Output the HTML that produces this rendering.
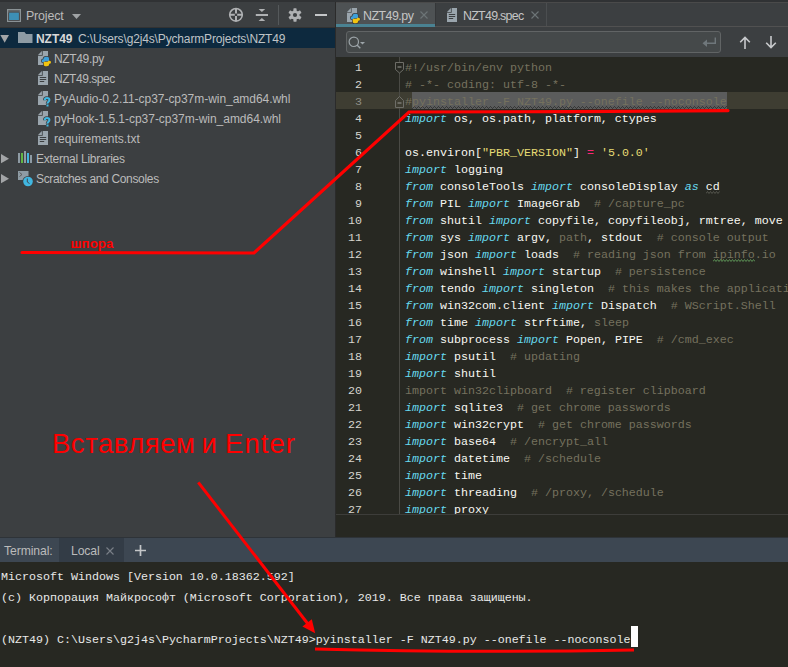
<!DOCTYPE html>
<html><head><meta charset="utf-8">
<style>
*{margin:0;padding:0;box-sizing:border-box}
html,body{width:788px;height:667px;overflow:hidden;background:#3c3f41}
body{position:relative;font-family:"Liberation Sans",sans-serif}
.a{position:absolute}
.ui{font-family:"Liberation Sans",sans-serif;font-size:12px;color:#bbbbbb;white-space:pre}
.mono{font-family:"Liberation Mono",monospace;font-size:11.67px;white-space:pre}
.row{height:20px;line-height:20px}
.ln{position:absolute;left:0;width:26px;text-align:right;color:#d6d6ce}
.cl{position:absolute;left:69px;color:#f8f8f2}
.kw{color:#66d9ef;font-style:italic}
.cm{color:#75715e}
.st{color:#e6db74}
.op{color:#f92672}
.un{color:#75715e}
.tl{position:absolute;left:1px;color:#e8e8e8}
</style></head><body>
<svg width="0" height="0" style="position:absolute">
 <defs>
  <symbol id="txt" viewBox="0 0 14 16"><path d="M4.7 0H10V14H0V4.7H4.7Z" fill="#9aa5ad"/><path d="M0 3.9L3.9 0V3.9Z" fill="#9aa5ad"/><path d="M1.8 6.5H8.2M1.8 8.5H8.2M1.8 10.5H6.2" fill="none" stroke="#3c3f41" stroke-width="1"/></symbol>
  <symbol id="py" viewBox="0 0 14 16"><path d="M4.7 0H10V14H0V4.7H4.7Z" fill="#9aa5ad"/><path d="M0 3.9L3.9 0V3.9Z" fill="#9aa5ad"/>
    <g fill="#3c3f41" stroke="#3c3f41" stroke-width="1.5" stroke-linejoin="round"><path d="M5.5 8.3Q5.5 5.8 8 5.8H9.2Q11 5.8 11 7.6V9.5Q11 10.3 10.2 10.3H7.3Q6.5 10.3 6.5 11.1V11.3H5Q3.7 11.3 3.7 9.8Q3.7 8.3 5.5 8.3Z"/><path d="M11.2 12.7Q11.2 15.2 8.7 15.2H7.5Q5.7 15.2 5.7 13.4V11.5Q5.7 10.7 6.5 10.7H9.4Q10.2 10.7 10.2 9.9V9.7H11.7Q13 9.7 13 11.2Q13 12.7 11.2 12.7Z"/></g>
    <path d="M5.5 8.3Q5.5 5.8 8 5.8H9.2Q11 5.8 11 7.6V9.5Q11 10.3 10.2 10.3H7.3Q6.5 10.3 6.5 11.1V11.3H5Q3.7 11.3 3.7 9.8Q3.7 8.3 5.5 8.3Z" fill="#3d9fd9"/><path d="M11.2 12.7Q11.2 15.2 8.7 15.2H7.5Q5.7 15.2 5.7 13.4V11.5Q5.7 10.7 6.5 10.7H9.4Q10.2 10.7 10.2 9.9V9.7H11.7Q13 9.7 13 11.2Q13 12.7 11.2 12.7Z" fill="#f2c40f"/></symbol>
  <symbol id="whl" viewBox="0 0 14 16"><path d="M4.7 0H10V14H0V4.7H4.7Z" fill="#9aa5ad"/><path d="M0 3.9L3.9 0V3.9Z" fill="#9aa5ad"/>
    <path d="M6.8 9.2C6.8 7.6 7.8 7 9 7C10.4 7 11.4 7.8 11.4 9C11.4 10.6 9.5 10.8 9.5 12.6" fill="none" stroke="#3c3f41" stroke-width="3.6"/>
    <rect x="8" y="12.6" width="3" height="3.4" fill="#3c3f41"/>
    <path d="M6.8 9.2C6.8 7.6 7.8 7 9 7C10.4 7 11.4 7.8 11.4 9C11.4 10.6 9.5 10.8 9.5 12.6" fill="none" stroke="#40b6e0" stroke-width="2"/>
    <rect x="8.5" y="13.5" width="2" height="2" fill="#40b6e0"/>
  </symbol>
 </defs>
</svg>

<div class="a" style="left:0;top:0;width:788px;height:2px;background:#303234"></div>

<!-- PROJECT PANEL -->
<div class="a" style="left:0;top:2px;width:335px;height:535px;background:#3c3f41"></div>
<div class="a" style="left:0;top:27px;width:335px;height:1px;background:#323232"></div>
<svg class="a" style="left:7px;top:9px" width="14" height="13" viewBox="0 0 14 13"><rect x="0.6" y="0.6" width="12.8" height="11.8" fill="none" stroke="#8a9296" stroke-width="1.2"/><rect x="0.6" y="0.6" width="12.8" height="3" fill="#8a9296" opacity="0.35"/><rect x="2.1" y="3.7" width="9.8" height="7.3" fill="#3d8fb5"/></svg>
<div class="a ui" style="left:26px;top:7px;line-height:18px;font-size:12.4px;color:#bbbbbb;letter-spacing:-0.15px">Project</div>
<svg class="a" style="left:71.5px;top:14px" width="9" height="5"><path d="M0 0H9L4.5 5Z" fill="#a0a3a5"/></svg>
<svg class="a" style="left:228px;top:7px" width="16" height="16" viewBox="0 0 16 16"><circle cx="8" cy="7.8" r="6.3" fill="none" stroke="#afb1b3" stroke-width="1.6"/><path d="M8 1.5V6.6M8 9V14.1M1.7 7.8H6.8M9.2 7.8H14.3" stroke="#afb1b3" stroke-width="2"/></svg>
<svg class="a" style="left:255px;top:8px" width="14" height="14" viewBox="0 0 14 14"><path d="M0.8 7H13" stroke="#afb1b3" stroke-width="2"/><path d="M3.6 1h6.6L6.9 4.1Z M3.6 13h6.6L6.9 9.9Z" fill="#afb1b3"/></svg>
<div class="a" style="left:278px;top:5px;width:1px;height:20px;background:#55595b"></div>
<svg class="a" style="left:288px;top:8px" width="14" height="14" viewBox="0 0 14 14"><g fill="#afb1b3"><circle cx="7" cy="7" r="4.6"/><rect x="5.4" y="0.3" width="3.2" height="13.4" rx="0.6"/><rect x="5.4" y="0.3" width="3.2" height="13.4" rx="0.6" transform="rotate(60 7 7)"/><rect x="5.4" y="0.3" width="3.2" height="13.4" rx="0.6" transform="rotate(-60 7 7)"/></g><circle cx="7" cy="7" r="2.1" fill="#3c3f41"/></svg>
<div class="a" style="left:315px;top:14px;width:12px;height:2px;background:#c4c6c8"></div>

<div class="a" style="left:0;top:28px;width:335px;height:20px;background:#0d293e"></div>
<svg class="a" style="left:0;top:35px" width="10" height="8"><path d="M0.3 0H9L4.65 7.8Z" fill="#a3a5a7"/></svg>
<svg class="a" style="left:18px;top:32px" width="15" height="12"><path d="M0 0H6.5L8 2H14.5V11H0Z" fill="#8e9ba4"/></svg>
<div class="a ui row" style="left:36px;top:29px;font-weight:bold;color:#d8d8d8;letter-spacing:-0.05px">NZT49</div>
<div class="a ui row" style="left:78px;top:29px;color:#bfc3c6;letter-spacing:-0.15px">C:\Users\g2j4s\PycharmProjects\NZT49</div>

<svg class="a" style="left:38px;top:51px" width="14" height="16"><use href="#py"/></svg>
<div class="a ui row" style="left:54px;top:49px;letter-spacing:-0.35px">NZT49.py</div>
<svg class="a" style="left:38px;top:71px" width="14" height="16"><use href="#txt"/></svg>
<div class="a ui row" style="left:54px;top:69px;letter-spacing:-0.45px">NZT49.spec</div>
<svg class="a" style="left:38px;top:91px" width="14" height="16"><use href="#whl"/></svg>
<div class="a ui row" style="left:54px;top:89px;letter-spacing:-0.04px">PyAudio-0.2.11-cp37-cp37m-win_amd64.whl</div>
<svg class="a" style="left:38px;top:111px" width="14" height="16"><use href="#whl"/></svg>
<div class="a ui row" style="left:54px;top:109px;letter-spacing:-0.03px">pyHook-1.5.1-cp37-cp37m-win_amd64.whl</div>
<svg class="a" style="left:38px;top:131px" width="14" height="16"><use href="#txt"/></svg>
<div class="a ui row" style="left:54px;top:129px;letter-spacing:-0.02px">requirements.txt</div>

<svg class="a" style="left:1px;top:154px" width="9" height="10"><path d="M0 0V9.3L8 4.65Z" fill="#a3a5a7"/></svg>
<svg class="a" style="left:18px;top:151px" width="15" height="13"><rect x="0" y="2" width="2" height="10" fill="#8e9ba4"/><rect x="3" y="2" width="2" height="10" fill="#62b543"/><rect x="6" y="0" width="2" height="12" fill="#8e9ba4"/><rect x="9" y="2" width="2" height="10" fill="#40b6e0"/><rect x="12" y="4" width="2" height="8" fill="#8e9ba4"/></svg>
<div class="a ui row" style="left:36px;top:149px;letter-spacing:-0.26px">External Libraries</div>
<svg class="a" style="left:1px;top:174px" width="9" height="10"><path d="M0 0V9.3L8 4.65Z" fill="#a3a5a7"/></svg>
<svg class="a" style="left:17px;top:170px" width="18" height="18"><rect x="1" y="1" width="10.5" height="9" fill="#8e9ba4"/><path d="M2.5 2.5L5 4.5L2.5 6.5" fill="none" stroke="#555" stroke-width="0.9"/><circle cx="11" cy="11.5" r="5.6" fill="#3c3f41"/><circle cx="11" cy="11.5" r="4.8" fill="#40b6e0"/><path d="M10.3 8.5V12L12.5 13.5" fill="none" stroke="#3c4a55" stroke-width="1"/></svg>
<div class="a ui row" style="left:36px;top:169px;letter-spacing:-0.33px">Scratches and Consoles</div>

<!-- EDITOR TABS -->
<div class="a" style="left:335px;top:2px;width:1px;height:535px;background:#2b2b2b"></div>
<div class="a" style="left:336px;top:2px;width:452px;height:25px;background:#3c3f41"></div>
<div class="a" style="left:336px;top:2px;width:452px;height:1px;background:#4a4a4a"></div>
<div class="a" style="left:336px;top:26px;width:452px;height:1px;background:#515151"></div>
<div class="a" style="left:336px;top:3px;width:99px;height:23px;background:#4e5254"></div>
<div class="a" style="left:336px;top:24px;width:99px;height:3px;background:#4a8292"></div>
<div class="a" style="left:435px;top:3px;width:1px;height:23px;background:#353739"></div>
<svg class="a" style="left:347px;top:8px" width="14" height="16"><use href="#py"/></svg>
<div class="a ui" style="left:363px;top:7px;line-height:18px;font-size:12.4px;color:#c5c5c5;letter-spacing:-0.5px">NZT49.py</div>
<svg class="a" style="left:420px;top:11px" width="8" height="8"><path d="M0.5 0.5L7.5 7.5M7.5 0.5L0.5 7.5" stroke="#6d7577" stroke-width="1.1"/></svg>
<svg class="a" style="left:447px;top:8px" width="14" height="16"><use href="#txt"/></svg>
<div class="a ui" style="left:463px;top:7px;line-height:18px;font-size:12.4px;color:#c5c5c5;letter-spacing:-0.7px">NZT49.spec</div>
<svg class="a" style="left:531px;top:11px" width="8" height="8"><path d="M0.5 0.5L7.5 7.5M7.5 0.5L0.5 7.5" stroke="#6d7577" stroke-width="1.1"/></svg>
<div class="a" style="left:546px;top:3px;width:1px;height:23px;background:#4b4e50"></div>

<!-- SEARCH -->
<div class="a" style="left:346px;top:31px;width:375px;height:22px;border:1px solid #616465;border-radius:3px;background:#45494a"></div>
<svg class="a" style="left:348px;top:36px" width="20" height="14"><circle cx="5.8" cy="5.8" r="4.7" fill="none" stroke="#9ca4a8" stroke-width="1.2"/><path d="M9 9L12.3 12.3" stroke="#9ca4a8" stroke-width="1.4"/><path d="M12 6H17L14.5 8.6Z" fill="#9ca4a8"/></svg>
<svg class="a" style="left:702px;top:37px" width="15" height="11"><path d="M13.3 0.5V6.3H4" fill="none" stroke="#6f777b" stroke-width="1.4"/><path d="M0.5 6.3L5 2.5V10Z" fill="#6f777b"/></svg>
<svg class="a" style="left:739px;top:36px" width="12" height="13"><path d="M6 1.5V13M1.2 6.3L6 1.5L10.8 6.3" fill="none" stroke="#c8cacc" stroke-width="1.6"/></svg>
<svg class="a" style="left:765px;top:36px" width="12" height="13"><path d="M6 0V11.5M1.2 6.7L6 11.5L10.8 6.7" fill="none" stroke="#c8cacc" stroke-width="1.6"/></svg>

<!-- EDITOR -->
<div class="a" style="left:336px;top:57px;width:452px;height:480px;background:#272822"></div>
<div class="a" style="left:336px;top:92px;width:452px;height:17px;background:#3e3d32"></div>
<div class="a" style="left:412px;top:92px;width:315px;height:17px;background:#5b5c5c"></div>
<svg class="a" style="left:412px;top:106px" width="315" height="3" shape-rendering="crispEdges"><defs><pattern id="zz" width="4" height="3" patternUnits="userSpaceOnUse"><rect x="2" y="0" width="1" height="1" fill="#363737"/><rect x="1" y="1" width="1" height="1" fill="#363737"/><rect x="3" y="1" width="1" height="1" fill="#363737"/><rect x="0" y="2" width="1" height="1" fill="#363737"/></pattern></defs><rect width="315" height="3" fill="url(#zz)"/></svg>
<div class="a" style="left:399px;top:57px;width:1px;height:457px;background:#4a4a45"></div>
<div class="a" style="left:336px;top:514px;width:452px;height:1px;background:#3d3d3a"></div>
<svg class="a" style="left:395px;top:62px" width="10" height="12"><path d="M0.5 0.5H8.5V7.5L4.5 11L0.5 7.5Z" fill="#272822" stroke="#6e6e68"/><path d="M2.5 5H6.5" stroke="#9a9a94"/></svg>
<svg class="a" style="left:395px;top:96px" width="10" height="12"><path d="M0.5 4.5L4.5 0.5L8.5 4.5V11.5H0.5Z" fill="#3e3d32" stroke="#6e6e68"/><path d="M2.5 7H6.5" stroke="#9a9a94"/></svg>
<div class="a mono" style="left:336px;top:60px;width:452px;height:454px;overflow:hidden;line-height:17px">
<div class="ln" style="top:0">1</div><div class="cl cm" style="top:0">#!/usr/bin/env python</div>
<div class="ln" style="top:17px">2</div><div class="cl cm" style="top:17px"># -*- coding: utf-8 -*-</div>
<div class="ln" style="top:34px;color:#8e8e86">3</div><div class="cl cm" style="top:34px">#pyinstaller -F NZT49.py --onefile --noconsole</div>
<div class="ln" style="top:51px">4</div><div class="cl" style="top:51px"><span class="kw">import</span> os, os.path, platform, ctypes</div>
<div class="ln" style="top:68px">5</div>
<div class="ln" style="top:85px">6</div><div class="cl" style="top:85px">os.environ[<span class="st">"PBR_VERSION"</span>] <span class="op">=</span> <span class="st">'5.0.0'</span></div>
<div class="ln" style="top:102px">7</div><div class="cl" style="top:102px"><span class="kw">import</span> logging</div>
<div class="ln" style="top:119px">8</div><div class="cl" style="top:119px"><span class="kw">from</span> consoleTools <span class="kw">import</span> consoleDisplay <span class="kw">as</span> cd</div>
<div class="ln" style="top:136px">9</div><div class="cl" style="top:136px"><span class="kw">from</span> PIL <span class="kw">import</span> ImageGrab  <span class="cm"># /capture_pc</span></div>
<div class="ln" style="top:153px">10</div><div class="cl" style="top:153px"><span class="kw">from</span> shutil <span class="kw">import</span> copyfile, copyfileobj, rmtree, move</div>
<div class="ln" style="top:170px">11</div><div class="cl" style="top:170px"><span class="kw">from</span> sys <span class="kw">import</span> argv, <span class="un">path</span>, stdout  <span class="cm"># console output</span></div>
<div class="ln" style="top:187px">12</div><div class="cl" style="top:187px"><span class="kw">from</span> json <span class="kw">import</span> loads  <span class="cm"># reading json from ipinfo.io</span></div>
<div class="ln" style="top:204px">13</div><div class="cl" style="top:204px"><span class="kw">from</span> winshell <span class="kw">import</span> startup  <span class="cm"># persistence</span></div>
<div class="ln" style="top:221px">14</div><div class="cl" style="top:221px"><span class="kw">from</span> tendo <span class="kw">import</span> singleton  <span class="cm"># this makes the application</span></div>
<div class="ln" style="top:238px">15</div><div class="cl" style="top:238px"><span class="kw">from</span> win32com.client <span class="kw">import</span> Dispatch  <span class="cm"># WScript.Shell</span></div>
<div class="ln" style="top:255px">16</div><div class="cl" style="top:255px"><span class="kw">from</span> time <span class="kw">import</span> strftime, <span class="un">sleep</span></div>
<div class="ln" style="top:272px">17</div><div class="cl" style="top:272px"><span class="kw">from</span> subprocess <span class="kw">import</span> Popen, PIPE  <span class="cm"># /cmd_exec</span></div>
<div class="ln" style="top:289px">18</div><div class="cl" style="top:289px"><span class="kw">import</span> psutil  <span class="cm"># updating</span></div>
<div class="ln" style="top:306px">19</div><div class="cl" style="top:306px"><span class="kw">import</span> shutil</div>
<div class="ln" style="top:323px">20</div><div class="cl un" style="top:323px">import win32clipboard  # register clipboard</div>
<div class="ln" style="top:340px">21</div><div class="cl" style="top:340px"><span class="kw">import</span> sqlite3  <span class="cm"># get chrome passwords</span></div>
<div class="ln" style="top:357px">22</div><div class="cl" style="top:357px"><span class="kw">import</span> win32crypt  <span class="cm"># get chrome passwords</span></div>
<div class="ln" style="top:374px">23</div><div class="cl" style="top:374px"><span class="kw">import</span> base64  <span class="cm"># /encrypt_all</span></div>
<div class="ln" style="top:391px">24</div><div class="cl" style="top:391px"><span class="kw">import</span> datetime  <span class="cm"># /schedule</span></div>
<div class="ln" style="top:408px">25</div><div class="cl" style="top:408px"><span class="kw">import</span> time</div>
<div class="ln" style="top:425px">26</div><div class="cl" style="top:425px"><span class="kw">import</span> threading  <span class="cm"># /proxy, /schedule</span></div>
<div class="ln" style="top:442px">27</div><div class="cl" style="top:442px"><span class="kw">import</span> proxy</div>
</div>

<svg class="a" style="left:713px;top:259px" width="42" height="3"><path d="M0 2.5L1.5 0.5L3 2.5L4.5 0.5L6 2.5L7.5 0.5L9 2.5L10.5 0.5L12 2.5L13.5 0.5L15 2.5L16.5 0.5L18 2.5L19.5 0.5L21 2.5L22.5 0.5L24 2.5L25.5 0.5L27 2.5L28.5 0.5L30 2.5L31.5 0.5L33 2.5L34.5 0.5L36 2.5L37.5 0.5L39 2.5L40.5 0.5L42 2.5" fill="none" stroke="#5b8f55" stroke-width="1"/></svg>
<svg class="a" style="left:706px;top:191px" width="14" height="3"><path d="M0 2.5L1.5 0.5L3 2.5L4.5 0.5L6 2.5L7.5 0.5L9 2.5L10.5 0.5L12 2.5L13.5 0.5" fill="none" stroke="#55554e" stroke-width="1"/></svg>
<!-- TERMINAL -->
<div class="a" style="left:0;top:537px;width:788px;height:130px;background:#272822"></div>
<div class="a" style="left:0;top:537px;width:788px;height:25px;background:#3d4752"></div>
<div class="a" style="left:0;top:537px;width:788px;height:1px;background:#2e3338"></div>
<div class="a ui" style="left:4px;top:542px;line-height:18px;font-size:12.2px;color:#bbbbbb;letter-spacing:-0.1px">Terminal:</div>
<div class="a" style="left:59px;top:538px;width:65px;height:24px;background:#333c46"></div>
<div class="a ui" style="left:71px;top:542px;line-height:18px;font-size:12.2px;color:#bbbbbb;letter-spacing:-0.1px">Local</div>
<svg class="a" style="left:106px;top:547px" width="8" height="8"><path d="M0.5 0.5L7.5 7.5M7.5 0.5L0.5 7.5" stroke="#7a8088" stroke-width="1.1"/></svg>
<svg class="a" style="left:135px;top:545px" width="11" height="11"><path d="M5.5 0V11M0 5.5H11" stroke="#c4c6c8" stroke-width="1.7"/></svg>
<div class="a mono" style="left:0;top:567px;width:788px;height:100px;line-height:20.67px">
<div class="tl" style="top:0">Microsoft Windows [Version 10.0.18362.592]</div>
<div class="tl" style="top:21px">(c) Корпорация Майкрософт (Microsoft Corporation), 2019. Все права защищены.</div>
<div class="tl" style="top:63px">(NZT49) C:\Users\g2j4s\PycharmProjects\NZT49&gt;pyinstaller -F NZT49.py --onefile --noconsole</div>
</div>
<div class="a" style="left:631px;top:626px;width:7px;height:21px;background:#ffffff"></div>

<!-- ANNOTATIONS -->
<svg class="a" style="left:0;top:0" width="788" height="667">
  <polyline points="22,252.5 254,253 409,112 570,111.6 728,110.6" fill="none" stroke="#ff0000" stroke-width="3.2" stroke-linejoin="miter" stroke-linecap="round"/>
  <line x1="198.3" y1="482.4" x2="308" y2="624" stroke="#ff0000" stroke-width="3"/>
  <path d="M315.2 633.2 L302.4 626.6 L311.8 619.3 Z" fill="#ff0000"/>
  <path d="M315 649 Q470 653 634 650" fill="none" stroke="#ff0000" stroke-width="3"/>
  <text x="70.5" y="247.6" font-family="Liberation Sans" font-size="13.2" font-weight="bold" letter-spacing="0.1" fill="#ff0000">шпора</text>
  <text y="453" font-family="Liberation Sans" font-size="27.5" fill="#ff0000"><tspan x="52" textLength="143" lengthAdjust="spacing">Вставляем</tspan><tspan x="201.5">и</tspan><tspan x="225" textLength="70" lengthAdjust="spacing">Enter</tspan></text>
</svg>
</body></html>
